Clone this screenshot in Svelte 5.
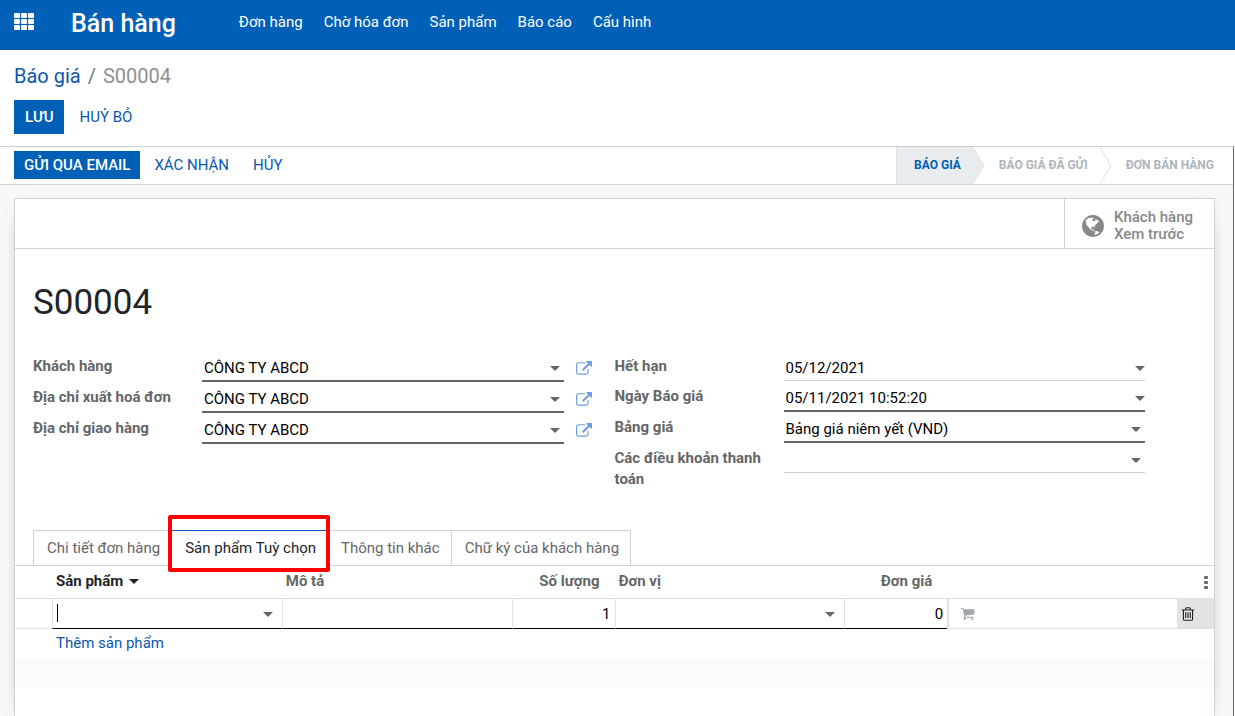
<script>
  const menu = ['Đơn hàng', 'Chờ hóa đơn', 'Sản phẩm', 'Báo cáo', 'Cấu hình'];
  const stages = ['BÁO GIÁ', 'BÁO GIÁ ĐÃ GỬI', 'ĐƠN BÁN HÀNG'];
  const tabs = ['Chi tiết đơn hàng', 'Sản phẩm Tuỳ chọn', 'Thông tin khác', 'Chữ ký của khách hàng'];
  const left = [
    { id: 'customer', label: 'Khách hàng', value: 'CÔNG TY ABCD' },
    { id: 'invoice', label: 'Địa chỉ xuất hoá đơn', value: 'CÔNG TY ABCD' },
    { id: 'delivery', label: 'Địa chỉ giao hàng', value: 'CÔNG TY ABCD' }
  ];
  const right = [
    { id: 'expiry', label: 'Hết hạn', value: '05/12/2021', date: true },
    { id: 'ordered', label: 'Ngày Báo giá', value: '05/11/2021 10:52:20', date: true, required: true },
    { id: 'pricelist', label: 'Bảng giá', value: 'Bảng giá niêm yết (VND)', required: true },
    { id: 'terms', label: 'Các điều khoản thanh toán', value: '' }
  ];
  let active = $state(1);
</script>

<header class="navbar">
  <button class="apps" aria-label="Ứng dụng">
    <svg width="21" height="17" viewBox="0 0 21 17" fill="currentColor">
      {#each [0, 6, 12] as y}
        {#each [0, 7, 14] as x}
          <rect {x} {y} width="6" height="5" rx="1" />
        {/each}
      {/each}
    </svg>
  </button>
  <a class="brand" href="#home">Bán hàng</a>
  <nav class="menu">
    {#each menu as item}<a href="#menu">{item}</a>{/each}
  </nav>
</header>

<section class="control">
  <ol class="crumbs">
    <li><a href="#quotes">Báo giá</a></li>
    <li class="slash">/</li>
    <li class="here">S00004</li>
  </ol>
  <div class="actions">
    <button class="btn primary tall">LƯU</button>
    <button class="btn tall">HUỶ BỎ</button>
  </div>
</section>

<main class="content">
  <div class="statusbar">
    <div class="actions">
      <button class="btn primary">GỬI QUA EMAIL</button>
      <button class="btn">XÁC NHẬN</button>
      <button class="btn">HỦY</button>
    </div>
    <div class="stages">
      {#each stages as stage, i}
        <button class="stage" class:current={i === 0}>
          {stage}
          {#if i < 2}
            <svg class="arrow" width="13" height="37" viewBox="0 0 13 37">
              <path d="M0 0L11 18.500L0 37z" fill={i === 0 ? '#e9ecef' : '#fff'} />
              <path d="M0 0L11 18.500L0 37" fill="none" stroke="#dee2e6" />
            </svg>
          {/if}
        </button>
      {/each}
    </div>
  </div>

  <div class="sheet">
    <div class="buttonbox">
      <button class="preview">
        <svg width="22" height="22" viewBox="128 128 1536 1536" fill="#888">
          <path d="M896 128q209 0 385.500 103t279.500 279.500 103 385.500-103 385.500-279.500 279.500-385.500 103-385.500-103-279.500-279.500-103-385.500 103-385.500 279.500-279.500 385.500-103zm274 521q-2 1-9.500 9.500t-13.500 9.500q2 0 4.500-5t5-11 3.500-7q6-7 22-15 14-6 52-12 34-8 51 11-2-2 9.500-13t14.500-12q3-2 15-4.500t15-7.500l2-22q-12 1-17.500-7t-6.500-21q0 2-6 8 0-7-4.500-8t-11.500 1-9 1q-10-3-15-7.500t-8-16.500-4-15q-2-5-9.500-11t-9.500-10q-1-2-2.500-5.500t-3-6.500-4-5.500-5.500-2.500-7 5-7.500 10-4.500 5q-3-2-6-1.500t-4.500 1-4.500 3-5 3.500q-3 2-8.500 3t-8.500 2q15-5-1-11-10-4-16-3 9-4 7.500-12t-8.500-14h5q-1-4-8.500-8.500t-17.500-8.500-13-6q-8-5-34-9.500t-33-.5q-5 6-4.500 10.500t4 14 3.500 12.500q1 6-5.500 13t-6.500 12q0 7 14 15.500t10 21.500q-3 8-16 16t-16 12q-5 8-1.500 18.500t10.500 16.500q2 2 1.500 4t-3.500 4.500-5.500 4-6.500 3.500l-3 2q-11 5-20.500-6t-13.500-26q-7-25-16-30-23-8-29 1-5-13-41-26-25-9-58-4 6-1 0-15-7-15-19-12 3-6 4-17.500t1-13.500q3-13 12-23 1-1 7-8.500t9.500-13.500.5-6q35 4 50-11 5-5 11.500-17t10.500-17q9-6 14-5.500t14.500 5.500 14.500 5q14 1 15.500-11t-7.500-20q12 1 3-17-4-7-8-9-12-4-27 5-8 4 2 8-1-1-9.500 10.500t-16.500 17.500-16-5q-1-1-5.500-13.500t-9.500-13.500q-8 0-16 15 3-8-11-15t-24-8q19-12-8-27-7-4-20.500-5t-19.500 4q-5 7-5.500 11.500t5 8 10.500 5.500 11.500 4 8.500 3q14 10 8 14-2 1-8.500 3.500t-11.500 4.500-6 4q-3 4 0 14t-2 14q-5-5-9-17.500t-7-16.500q7 9-25 6l-10-1q-4 0-16 2t-20.500 1-13.500-8q-4-8 0-20 1-4 4-2-4-3-11-9.500t-10-8.500q-46 15-94 41 6 1 12-1 5-2 13-6.500t10-5.500q34-14 42-7l5-5q14 16 20 25-7-4-30-1-20 6-22 12 7 12 5 18-4-3-11.500-10t-14.500-11-15-5q-16 0-22 1-146 80-235 222 7 7 12 8 4 1 5 9t2.500 11 11.500-3q9 8 3 19 1-1 44 27 19 17 21 21 3 11-10 18-1-2-9-9t-9-4q-3 5 .5 18.500t10.500 12.500q-7 0-9.500 16t-2.500 35.500-1 23.500l2 1q-3 12 5.500 34.500t21.500 19.500q-13 3 20 43 6 8 8 9 3 2 12 7.500t15 10 10 10.500q4 5 10 22.500t14 23.500q-2 6 9.500 20t10.500 23q-1 0-2.500 1t-2.500 1q3 7 15.500 14t15.500 13q1 3 2 10t3 11 8 2q2-20-24-62-15-25-17-29-3-5-5.500-15.500t-4.500-14.500q2 0 6 1.500t8.500 3.500 7.500 4 2 3q-3 7 2 17.500t12 18.500 17 19 12 13q6 6 14 19.500t0 13.500q9 0 20 10.500t17 19.500q5 8 8 26t5 24q2 7 8.500 13.500t12.500 9.500l16 8 13 7q5 2 18.500 10.500t21.500 11.500q10 4 16 4t14.500-2.500 13.500-3.500q15-2 29 15t21 21q36 19 55 11-2 1 .5 7.500t8 15.500 9 14.500 5.500 8.500q5 6 18 15t18 15q6-4 7-9-3 8 7 20t18 10q14-3 14-32-31 15-49-18 0-1-2.500-5.500t-4-8.500-2.500-8.500 0-7.500 5-3q9 0 10-3.500t-2-12.500-4-13q-1-8-11-20t-12-15q-5 9-16 8t-16-9q0 1-1.500 5.500t-1.500 6.500q-13 0-15-1 1-3 2.500-17.500t3.500-22.500q1-4 5.500-12t7.500-14.500 4-12.500-4.500-9.500-17.500-2.500q-19 1-26 20-1 3-3 10.500t-5 11.500-9 7q-7 3-24 2t-24-5q-13-8-22.500-29t-9.500-37q0-10 2.500-26.500t3-25-5.500-24.500q3-2 9-9.500t10-10.500q2-1 4.500-1.500t4.500 0 4-1.500 3-6q-1-1-4-3-3-3-4-3 7 3 28.500-1.500t27.500 1.500q15 11 22-2 0-1-2.500-9.500t-.5-13.500q5 27 29 9 3 3 15.500 5t17.500 5q3 2 7 5.500t5.500 4.500 5-.5 8.500-6.500q10 14 12 24 11 40 19 44 7 3 11 2t4.500-9.500 0-14-1.500-12.500l-1-8v-18l-1-8q-15-3-18.500-12t1.500-18.500 15-18.500q1-1 8-3.500t15.500-6.500 12.500-8q21-19 15-35 7 0 11-9-1 0-5-3t-7.500-5-4.500-2q9-5 2-16 5-3 7.500-11t7.500-10q9 12 21 2 7-8 1-16 5-7 20.500-10.500t18.500-9.500q7 2 8-2t1-12 3-12q4-5 15-9t13-5l17-11q3-4 0-4 18 2 31-11 10-11-6-20 3-6-3-9.500t-15-5.500q3-1 11.500-.5t10.500-1.500q15-10-7-16-17-5-43 12zm-163 877q206-36 351-189-3-3-12.500-4.500t-12.500-3.500q-18-7-24-8 1-7-2.500-13t-8-9-12.500-8-11-7q-2-2-7-6t-7-5.500-7.500-4.500-8.500-2-10 1l-3 1q-3 1-5.500 2.500t-5.500 3-4 3 0 2.500q-21-17-36-22-5-1-11-5.500t-10.500-7-10-1.500-11.500 7q-5 5-6 15t-2 13q-7-5 0-17.500t2-18.500q-3-6-10.500-4.500t-12 4.500-11.500 8.500-9 6.500-8.500 5.500-8.500 7.500q-3 4-6 12t-5 11q-2-4-11.500-6.500t-9.500-5.500q2 10 4 35t5 38q7 31-12 48-27 25-29 40-4 22 12 26 0 7-8 20.500t-7 21.500q0 6 2 16z" />
        </svg>
        <span>Khách hàng<br />Xem trước</span>
      </button>
    </div>

    <h1>S00004</h1>

    <form class="groups">
      <div class="group">
        {#each left as f}
          <div class="field required">
            <label for={f.id}>{f.label}</label>
            <div class="control-wrap">
              <select id={f.id}><option>{f.value}</option></select>
              <i class="caret inset"></i>
            </div>
            <button type="button" class="open" aria-label="Mở">
              <svg width="16" height="16" viewBox="0 0 1792 1792" fill="#6d9eda">
                <path d="M1408 928v320q0 119-84.500 203.500t-203.500 84.500h-832q-119 0-203.500-84.500t-84.500-203.500v-832q0-119 84.500-203.500t203.500-84.500h704q14 0 23 9t9 23v64q0 14-9 23t-23 9h-704q-66 0-113 47t-47 113v832q0 66 47 113t113 47h832q66 0 113-47t47-113v-320q0-14 9-23t23-9h64q14 0 23 9t9 23zm384-864v512q0 26-19 45t-45 19-45-19l-176-176-652 652q-10 10-23 10t-23-10l-114-114q-10-10-10-23t10-23l652-652-176-176q-19-19-19-45t19-45 45-19h512q26 0 45 19t19 45z" />
              </svg>
            </button>
          </div>
        {/each}
      </div>
      <div class="group">
        {#each right as f}
          <div class="field" class:required={f.required}>
            <label for={f.id}>{f.label}</label>
            <div class="control-wrap">
              {#if f.date}
                <input id={f.id} type="text" value={f.value} />
                <i class="caret"></i>
              {:else}
                <select id={f.id}><option>{f.value}</option></select>
                <i class="caret inset"></i>
              {/if}
            </div>
          </div>
        {/each}
      </div>
    </form>

    <div class="tabs" role="tablist">
      {#each tabs as tab, i}
        <button
          role="tab"
          class="tab"
          class:active={active === i}
          aria-selected={active === i}
          onclick={() => (active = i)}
        >
          {tab}
          {#if i === 1}<span class="marker"></span>{/if}
        </button>
      {/each}
    </div>

    <table>
      <colgroup>
        <col class="c-edge" /><col /><col /><col class="c-num" /><col /><col class="c-num" /><col /><col class="c-edge" />
      </colgroup>
      <thead>
        <tr>
          <th></th>
          <th class="sorted">Sản phẩm <i class="caret sort"></i></th>
          <th>Mô tả</th>
          <th class="num">Số lượng</th>
          <th>Đơn vị</th>
          <th class="num">Đơn giá</th>
          <th></th>
          <th class="more">
            <button aria-label="Cột tùy chọn">
              <svg width="4" height="14" viewBox="0 0 4 14" fill="#666">
                <rect width="4" height="3" y="1" rx="1" /><rect width="4" height="3" y="6" rx="1" /><rect width="4" height="3" y="11" rx="1" />
              </svg>
            </button>
          </th>
        </tr>
      </thead>
      <tbody>
        <tr class="edit">
          <td></td>
          <td class="cell">
            <div class="control-wrap">
              <span class="cursor"></span>
              <input type="text" aria-label="Sản phẩm" />
              <i class="caret inset"></i>
            </div>
          </td>
          <td class="cell"><input type="text" aria-label="Mô tả" /></td>
          <td class="cell"><input class="num" type="text" aria-label="Số lượng" value="1" /></td>
          <td class="cell">
            <div class="control-wrap">
              <select aria-label="Đơn vị"><option></option></select>
              <i class="caret inset"></i>
            </div>
          </td>
          <td class="cell"><input class="num" type="text" aria-label="Đơn giá" value="0" /></td>
          <td class="cart">
            <button aria-label="Thêm vào đơn hàng">
              <svg width="15" height="15" viewBox="0 0 1792 1792" fill="#a1a6ab">
                <path d="M704 1536q0 52-38 90t-90 38-90-38-38-90 38-90 90-38 90 38 38 90zm896 0q0 52-38 90t-90 38-90-38-38-90 38-90 90-38 90 38 38 90zm128-1088v512q0 24-16.500 42.500t-40.500 21.500l-1044 122q13 60 13 70 0 16-24 64h920q26 0 45 19t19 45-19 45-45 19h-1024q-26 0-45-19t-19-45q0-11 8-31.500t16-36 21.500-40 15.500-29.500l-177-823h-204q-26 0-45-19t-19-45 19-45 45-19h256q16 0 28.500 6.500t19.500 15.500 13 24.500 8 26 5.500 29.500 4.500 26h1201q26 0 45 19t19 45z" />
              </svg>
            </button>
          </td>
          <td class="trash">
            <button aria-label="Xóa">
              <svg width="16" height="16" viewBox="0 0 1792 1792" fill="#212529">
                <path d="M704 736v576q0 14-9 23t-23 9h-64q-14 0-23-9t-9-23v-576q0-14 9-23t23-9h64q14 0 23 9t9 23zm256 0v576q0 14-9 23t-23 9h-64q-14 0-23-9t-9-23v-576q0-14 9-23t23-9h64q14 0 23 9t9 23zm256 0v576q0 14-9 23t-23 9h-64q-14 0-23-9t-9-23v-576q0-14 9-23t23-9h64q14 0 23 9t9 23zm128 724v-948h-896v948q0 22 7 40.500t14.500 27 10.500 8.500h832q3 0 10.500-8.500t14.500-27 7-40.500zm-672-1076h448l-48-117q-7-9-17-11h-317q-10 2-17 11zm928 32v64q0 14-9 23t-23 9h-96v948q0 83-47 143.500t-113 60.500h-832q-66 0-113-58.500t-47-141.500v-952h-96q-14 0-23-9t-9-23v-64q0-14 9-23t23-9h309l70-167q15-37 54-63t79-26h320q40 0 79 26t54 63l70 167h309q14 0 23 9t9 23z" />
              </svg>
            </button>
          </td>
        </tr>
        <tr><td></td><td class="add" colspan="7"><a href="#add">Thêm sản phẩm</a></td></tr>
        <tr class="stripe"><td colspan="8"></td></tr>
        <tr><td colspan="8"></td></tr>
      </tbody>
    </table>
  </div>
</main>

<style>
  :global(body) {
    overflow: hidden;
    background: #fff;
    color: #212529;
    font: 15px/21px Roboto, sans-serif;
  }
  :global(#app) {
    height: 100vh;
    display: flex;
    flex-direction: column;
  }
  button, input, select {
    margin: 0;
    padding: 0;
    border: 0;
    border-radius: 0;
    background: none;
    color: inherit;
    font: inherit;
    appearance: none;
    outline: 0;
  }
  svg { display: block; }
  a { color: #0b57ad; text-decoration: none; }

  .navbar {
    flex: none;
    height: 50px;
    box-sizing: border-box;
    display: flex;
    align-items: flex-start;
    padding: 0 14px;
    background: #0060b7;
    border-bottom: 1px solid #0056a5;
    color: #fff;
  }
  .navbar a { color: #fff; }
  .apps { padding: 13px 0; }
  .brand {
    margin: 0 63px 0 36px;
    font-size: 25px;
    font-weight: 500;
    line-height: 48px;
  }
  .menu { display: flex; gap: 21px; line-height: 44px; }

  .control {
    flex: none;
    padding: 14px 14px 12px;
    border-bottom: 1px solid #ccc;
  }
  .crumbs {
    display: flex;
    gap: 7px;
    margin: 0 0 12px;
    padding: 0;
    list-style: none;
    font-size: 20px;
    line-height: 24px;
  }
  .slash { color: #6c757d; }
  .here { color: #8f8f8f; }
  .actions { display: flex; gap: 4px; }
  .btn {
    height: 28px;
    padding: 0 10px;
    color: #0b57ad;
    white-space: nowrap;
  }
  .btn.tall { height: 34px; padding: 0 11px; }
  .btn.primary { background: #0060b7; color: #fff; font-weight: 500; }

  .content {
    flex: 1;
    min-height: 0;
    display: flex;
    flex-direction: column;
    margin-right: 1px;
    border-right: 1px solid #666;
    background: #f8f8f8;
  }
  .statusbar {
    flex: none;
    display: flex;
    justify-content: space-between;
    height: 37px;
    padding-left: 14px;
    background: #fff;
    border-bottom: 1px solid #ced4da;
  }
  .statusbar .actions { padding-top: 4px; }
  .stages { display: flex; border-left: 1px solid #dee2e6; }
  .stage {
    position: relative;
    padding: 0 12px 0 26px;
    color: #adb5bd;
    font-size: 12px;
    font-weight: 700;
  }
  .stage:last-child { padding-right: 19px; }
  .stage.current { padding-left: 17px; background: #e9ecef; color: #0060b7; }
  .arrow { position: absolute; left: 100%; top: 0; z-index: 1; }

  .sheet {
    flex: 1;
    margin: 13px 18px 0 14px;
    border: 1px solid #ced4da;
    border-bottom: 0;
    background: #fff;
    box-shadow: 0 5px 20px -15px #000;
  }
  .buttonbox {
    display: flex;
    justify-content: flex-end;
    border-bottom: 1px solid #ced4da;
  }
  .preview {
    display: flex;
    align-items: center;
    gap: 10px;
    height: 49px;
    padding: 4px 21px 0 17px;
    border-left: 1px solid #ced4da;
    color: #888;
    font-weight: 500;
    line-height: 17px;
    text-align: left;
  }
  h1 {
    margin: 33px 18px 32px;
    font-size: 35px;
    font-weight: 400;
    line-height: 42px;
  }
  .groups {
    display: grid;
    grid-template-columns: 1fr 1fr;
    margin: 0 18px;
    min-height: 140px;
  }
  .field {
    display: grid;
    grid-template-columns: 169px 1fr 51px;
    align-items: start;
    padding-bottom: 5px;
  }
  .field label {
    padding-right: 20px;
    margin-bottom: -5px;
    color: #666;
    font-weight: 700;
  }
  .control-wrap { position: relative; display: flex; }
  .control-wrap input, .control-wrap select { flex: 1; min-width: 0; }
  .field input, .field select {
    height: 24px;
    box-sizing: content-box;
    padding: 0 24px 0 2px;
    border-bottom: 1px solid #ccc;
    color: #000;
  }
  .field.required input, .field.required select { border-bottom: 2px solid #666; }
  .caret {
    position: absolute;
    right: 0;
    top: 10px;
    border: 5px solid transparent;
    border-top-color: #666;
    border-bottom: 0;
    pointer-events: none;
  }
  .caret.inset { right: 4px; }
  .open { padding: 5px 0 0 12px; }

  .tabs {
    display: flex;
    padding: 0 18px;
    margin-top: 34px;
    border-bottom: 1px solid #ced4da;
  }
  .tab {
    position: relative;
    height: 36px;
    margin-bottom: -1px;
    padding: 0 11px 0 13px;
    border: 1px solid #ced4da;
    border-left-width: 0;
    color: #666;
  }
  .tab:first-child { border-left-width: 1px; }
  .tab.active {
    border-top-color: #0060b7;
    border-bottom-color: #fff;
    background: #fff;
    color: #212529;
  }
  .marker {
    position: absolute;
    inset: -16px -3px -7px -4px;
    border: 4px solid #f00;
    border-radius: 2px;
    z-index: 2;
    pointer-events: none;
  }

  table {
    width: 100%;
    table-layout: fixed;
    border-collapse: separate;
    border-spacing: 0;
  }
  .c-edge { width: 37px; }
  .c-num { width: 103px; }
  th {
    height: 30px;
    padding: 0 4px 2px;
    border-bottom: 1px solid #dee2e6;
    color: #666;
    font-weight: 700;
    text-align: left;
  }
  th.num { padding-right: 15px; text-align: right; }
  th.sorted { color: #212529; }
  .caret.sort { position: static; display: inline-block; margin: 0 0 2px 2px; border-top-color: #212529; }
  .more button { display: block; margin-left: auto; padding: 2px 2px 0 0; }
  td { height: 29px; padding: 0; }
  .edit td { border-bottom: 1px solid #dee2e6; }
  .edit .cell { border-left: 1px solid #dee2e6; border-bottom-color: #000; }
  .cell input, .cell select {
    display: block;
    width: 100%;
    box-sizing: border-box;
    height: 29px;
    padding: 0 4px;
    color: #000;
  }
  .cell .caret { top: 13px; right: 9px; }
  .cell .num { text-align: right; }
  .cursor { position: absolute; left: 4px; top: 5px; width: 1px; height: 18px; background: #000; }
  .edit .cart { border-left: 2px solid #dee2e6; }
  .cart button { display: block; padding-left: 11px; }
  .trash { background: #e3e3e3; }
  .trash button { display: block; padding-left: 3px; }
  .add { padding-left: 4px; }
  .stripe { background: #fbfbfb; }
</style>
